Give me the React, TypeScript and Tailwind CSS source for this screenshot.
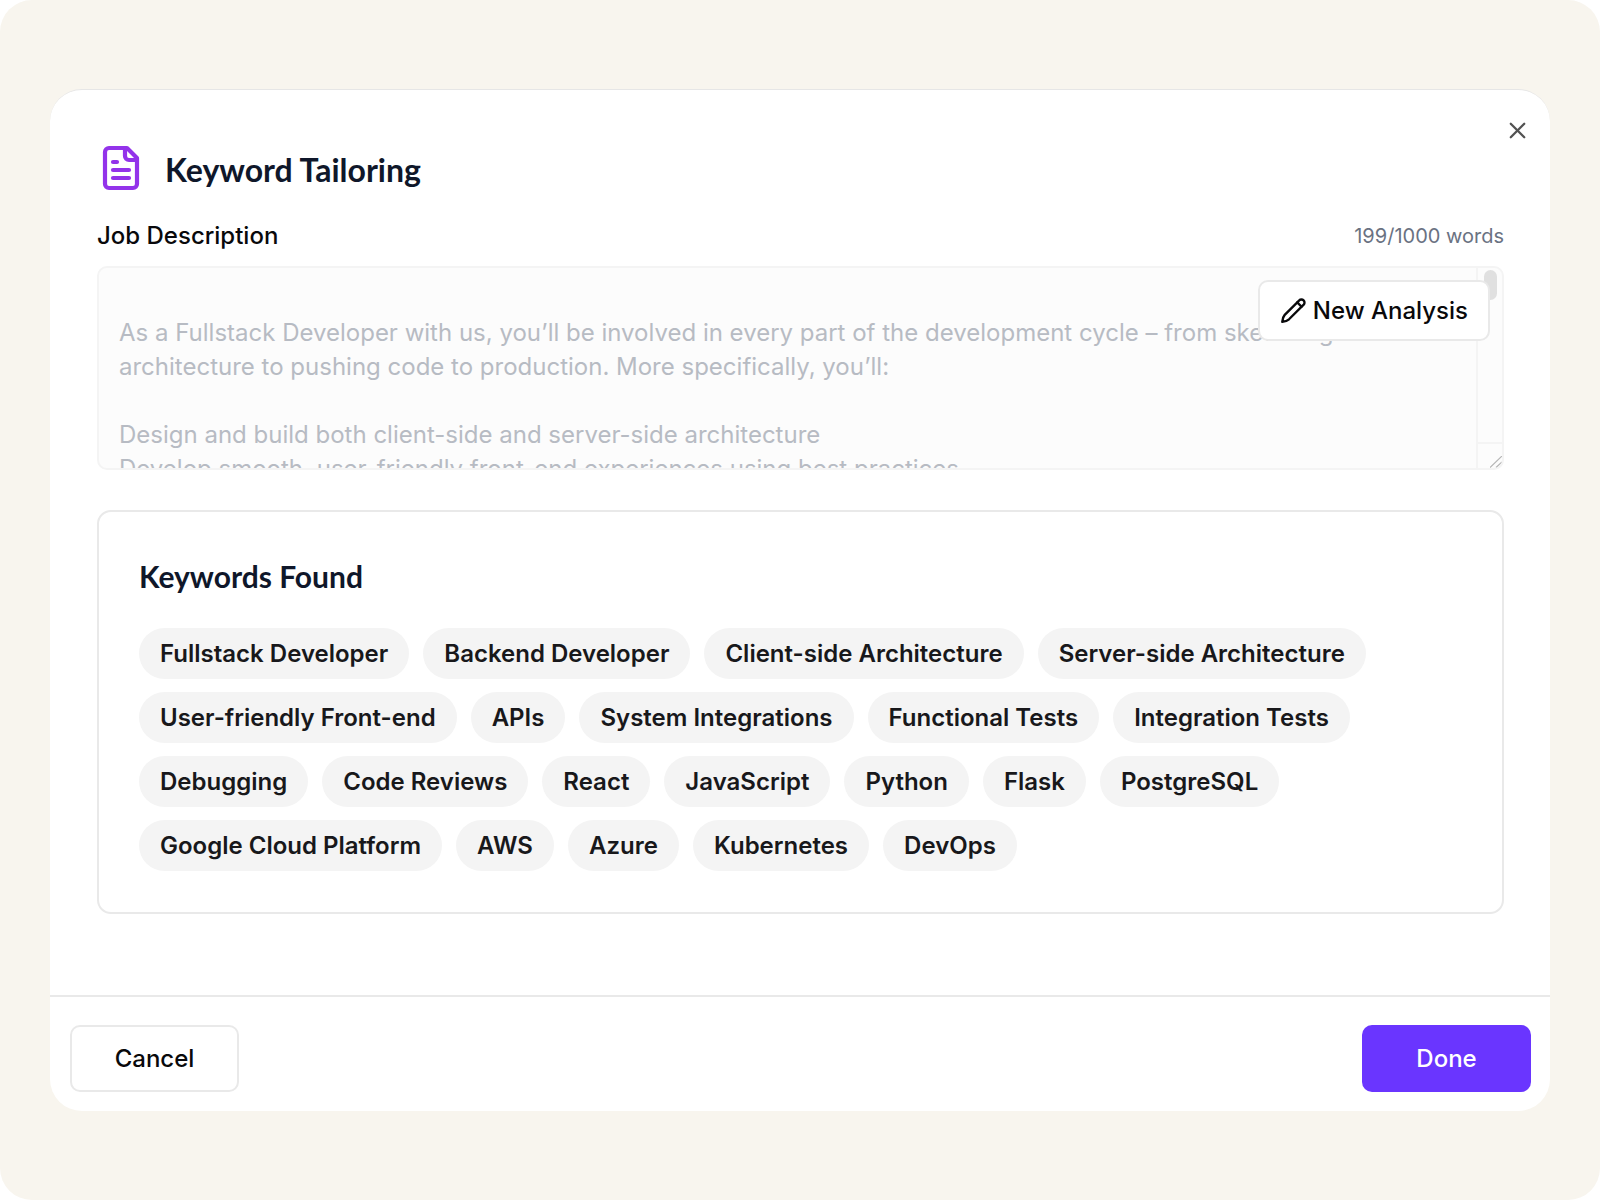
import React from 'react'
import { X } from 'lucide-react'

const keywords = [
    'Fullstack Developer',
    'Backend Developer',
    'Client-side Architecture',
    'Server-side Architecture',
    'User-friendly Front-end',
    'APIs',
    'System Integrations',
    'Functional Tests',
    'Integration Tests',
    'Debugging',
    'Code Reviews',
    'React',
    'JavaScript',
    'Python',
    'Flask',
    'PostgreSQL',
    'Google Cloud Platform',
    'AWS',
    'Azure',
    'Kubernetes',
    'DevOps',
]

const jobDescription = `
As a Fullstack Developer with us, you’ll be involved in every part of the development cycle – from sketching out architecture to pushing code to production. More specifically, you’ll:

Design and build both client-side and server-side architecture
Develop smooth, user-friendly front-end experiences using best practices`

const FileIcon = () => (
    <svg
        className="size-12 text-[#9333ea]"
        viewBox="0 0 24 24"
        fill="none"
        stroke="currentColor"
        strokeWidth="2.1"
        strokeLinecap="round"
        strokeLinejoin="round"
        aria-hidden="true"
    >
        <path d="M15 2H6a2 2 0 0 0-2 2v16a2 2 0 0 0 2 2h12a2 2 0 0 0 2-2V7Z" />
        <path d="M14 2v4a2 2 0 0 0 2 2h4" />
        <path d="M10 9H8" />
        <path d="M16 13H8" />
        <path d="M16 17H8" />
    </svg>
)

const PencilIcon = () => (
    <svg
        className="size-[27px]"
        viewBox="0 0 24 24"
        fill="none"
        stroke="currentColor"
        strokeWidth="2.1"
        strokeLinecap="round"
        strokeLinejoin="round"
        aria-hidden="true"
    >
        <path d="M16.7 3.4L4.2 15.9Q2.4 17.9 2 22Q6.1 21.6 8 19.8L20.6 7.3a2.8 2.8 0 1 0-3.9-3.9Z" />
        <path d="M15.3 4.8l3.9 3.9" />
    </svg>
)

const JobDescription = () => {
    return (
        <section>
            <div className="mb-2.5 flex h-10 items-center justify-between">
                <label htmlFor="job-description" className="text-2xl font-medium text-[#09090b]">
                    Job Description
                </label>
                <span className="text-xl text-gray-500">199/1000 words</span>
            </div>
            <div className="relative">
                <div className="flex h-[204px] overflow-hidden rounded-[10px] border-2 border-[#f4f4f4] bg-[#fcfcfc]">
                    <textarea
                        id="job-description"
                        disabled
                        defaultValue={jobDescription}
                        className="flex-1 resize-none overflow-hidden px-5 pt-3.5 text-2xl leading-[34px] text-[#b7bbc3]"
                    />
                    {/* scrollbar track */}
                    <div className="flex w-[26px] flex-col border-l-2 border-[#f4f4f4]">
                        <div className="flex flex-1 justify-center pt-0.5">
                            <div className="h-[30px] w-[13px] rounded-full bg-[#e0e0e0]" />
                        </div>
                        <div className="flex h-[26px] items-end justify-end border-t-2 border-[#f4f4f4]">
                            <svg className="size-3" viewBox="0 0 12 12" stroke="#b5b5b5" strokeWidth="1.2" aria-hidden="true">
                                <path d="M0 11.5L12 0M6 11.5L12 6" />
                            </svg>
                        </div>
                    </div>
                </div>
                <button
                    type="button"
                    className="absolute right-3.5 top-3.5 flex h-[61px] items-center gap-1.5 rounded-[10px] border-2 border-[#e9e9e9] bg-white px-5 text-2xl font-medium text-[#09090b]"
                >
                    <PencilIcon />
                    New Analysis
                </button>
            </div>
        </section>
    )
}

const KeywordsFound = () => {
    return (
        <section className="mt-10 rounded-[14px] border-2 border-[#e9e9e9] px-10 pb-[41px] pt-11">
            <h2 className="mb-8 font-[Lato] text-[30px] font-bold leading-10 text-[#0f172a]">Keywords Found</h2>
            <ul className="flex flex-wrap gap-x-3.5 gap-y-[13px]">
                {keywords.map((keyword) => (
                    <li
                        key={keyword}
                        className="flex h-[51px] items-center rounded-full bg-[#f4f4f4] px-[21px] text-2xl font-semibold text-[#18181b]"
                    >
                        {keyword}
                    </li>
                ))}
            </ul>
        </section>
    )
}

const App = () => {
    return (
        <div className="bg-white font-[Inter,sans-serif]">
            <main className="flex min-h-screen items-center rounded-[32px] bg-[#f8f5ee] px-[50px]">
                <div
                    role="dialog"
                    aria-labelledby="dialog-title"
                    className="relative w-full overflow-hidden rounded-[32px] border-t border-[#e6e6e6] bg-white"
                >
                    <button type="button" aria-label="Close" className="absolute right-[19px] top-[27px] text-[#525252]">
                        <X className="size-[27px]" />
                    </button>
                    <div className="pb-[81px] pl-[47px] pr-[46px] pt-[54px]">
                        <div className="mb-6 flex items-center gap-5">
                            <FileIcon />
                            <h1 id="dialog-title" className="pt-1 font-[Lato] text-[32px] font-bold leading-[44px] text-[#0f172a]">
                                Keyword Tailoring
                            </h1>
                        </div>
                        <JobDescription />
                        <KeywordsFound />
                    </div>
                    <footer className="flex justify-between border-t-2 border-[#e9e9e9] pb-[19px] pl-5 pr-[19px] pt-7">
                        <button
                            type="button"
                            className="h-[67px] w-[169px] rounded-[10px] border-2 border-[#e9e9e9] bg-white text-2xl font-medium text-[#09090b]"
                        >
                            Cancel
                        </button>
                        <button type="button" className="h-[67px] w-[169px] rounded-[10px] bg-[#6a35ff] text-2xl font-medium text-white">
                            Done
                        </button>
                    </footer>
                </div>
            </main>
        </div>
    )
}

export default App
